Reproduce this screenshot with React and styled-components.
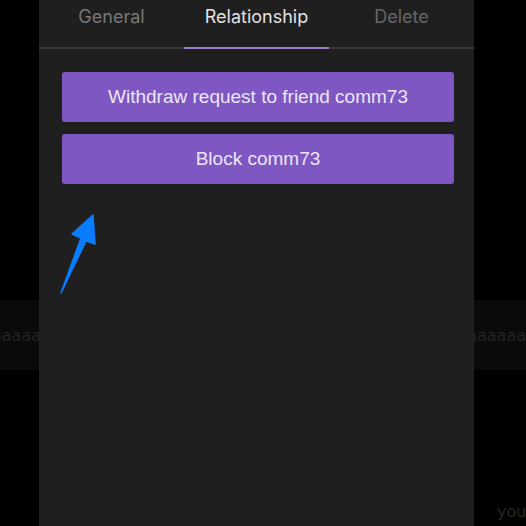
import styled, { createGlobalStyle } from "styled-components";

const Global = createGlobalStyle`
  html, body {
    margin: 0;
    padding: 0;
    background: #000;
  }
  body {
    font-family: Inter, "Noto Sans", sans-serif;
  }
`;

const Page = styled.div`
  position: relative;
  width: 526px;
  height: 526px;
  overflow: hidden;
  background: #000;
`;

const Backdrop = styled.div`
  display: flex;
  flex-direction: column;
  height: 100%;
  padding-top: 300px;
  box-sizing: border-box;
`;

const Band = styled.div`
  height: 70px;
  background: #0a0a0a;
  display: flex;
  align-items: center;
  justify-content: space-between;
  font-family: "DejaVu Sans", sans-serif;
  font-size: 16px;
  color: #232323;
  white-space: nowrap;
`;

const BandText = styled.span`
  margin-left: ${(p) => p.$offset || 0}px;
`;

const Footer = styled.div`
  margin-top: auto;
  padding-left: 497px;
  height: 24px;
  font-family: "DejaVu Sans", sans-serif;
  font-size: 16px;
  color: #262626;
`;

const Modal = styled.div`
  position: absolute;
  left: 39px;
  top: 0;
  width: 435px;
  height: 526px;
  background: #1f1f1f;
  display: flex;
  flex-direction: column;
`;

const Tabs = styled.div`
  display: grid;
  grid-template-columns: repeat(3, 1fr);
  border-bottom: 2px solid #373737;
`;

const Tab = styled.div`
  height: 49px;
  display: flex;
  justify-content: center;
  padding-top: 6px;
  box-sizing: border-box;
  font-size: 18px;
  color: ${(p) => (p.$active ? "#e2e2e2" : p.$muted ? "#666" : "#787878")};
  margin-bottom: -2px;
  border-bottom: 2px solid ${(p) => (p.$active ? "#9b80c8" : "transparent")};
`;

const Body = styled.div`
  display: flex;
  flex-direction: column;
  gap: 12px;
  padding: 23px 20px 0 23px;
`;

const Button = styled.button`
  all: unset;
  height: 50px;
  border-radius: 3px;
  background: #7e57c2;
  color: #ece6f6;
  font-family: "Liberation Sans", Arial, sans-serif;
  font-size: 19px;
  display: flex;
  align-items: center;
  justify-content: center;
  cursor: pointer;
`;

const Arrow = styled.svg`
  position: absolute;
  left: 55px;
  top: 205px;
`;

export default function App() {
  return (
    <>
      <Global />
      <Page>
        <Backdrop>
          <Band>
            <BandText $offset={-8}>aaaaaa</BandText>
            <BandText>aaaaaa</BandText>
          </Band>
          <Footer>you</Footer>
        </Backdrop>
        <Modal>
          <Tabs>
            <Tab>General</Tab>
            <Tab $active>Relationship</Tab>
            <Tab $muted>Delete</Tab>
          </Tabs>
          <Body>
            <Button>Withdraw request to friend comm73</Button>
            <Button>Block comm73</Button>
          </Body>
        </Modal>
        <Arrow width="50" height="95" viewBox="0 0 50 95">
          <path
            d="M38 10 L17 29 L26 33 L6 88 L31 36 L40 39 Z"
            fill="#0a7cff"
            stroke="#0a7cff"
            strokeWidth="1.5"
            strokeLinejoin="round"
          />
        </Arrow>
      </Page>
    </>
  );
}
